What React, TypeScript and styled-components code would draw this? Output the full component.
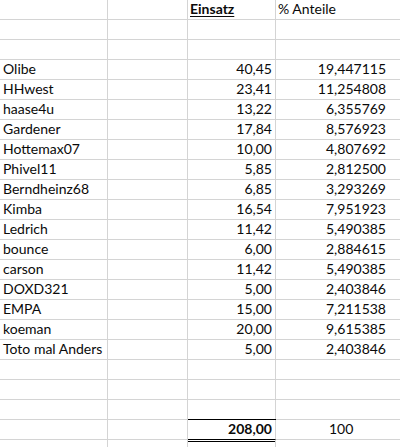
import React from "react";
import styled, { createGlobalStyle } from "styled-components";

const Global = createGlobalStyle`
  html, body { margin: 0; padding: 0; background: #ffffff; }
  body { font-family: "Lato", "Liberation Sans", sans-serif; }
`;

const Sheet = styled.div`
  display: grid;
  grid-template-columns: 108px 80px 88px 126px;
  grid-auto-rows: 20px;
  width: 400px;
  height: 447px;
  overflow: hidden;
  background: #fff;
  color: #0a0a0a;
  font-family: "Lato", "Liberation Sans", sans-serif;
  font-size: 14px;
`;

type CellProps = { $align?: "left" | "right" | "center"; $last?: boolean; $bold?: boolean; $under?: boolean; $total?: boolean; $pr?: number; $pl?: number };

const Cell = styled.div<CellProps>`
  position: relative;
  box-sizing: border-box;
  display: flex;
  align-items: flex-end;
  justify-content: ${(p) => (p.$align === "right" ? "flex-end" : p.$align === "center" ? "center" : "flex-start")};
  padding: 0 ${(p) => p.$pr ?? 3}px 2px ${(p) => p.$pl ?? 3}px;
  border-bottom: 1px solid ${(p) => (p.$total ? "#000" : "#d4d4d4")};
  border-right: ${(p) => (p.$last ? "none" : "1px solid #d4d4d4")};
  font-weight: ${(p) => (p.$bold ? 700 : 400)};
  text-decoration: ${(p) => (p.$under ? "underline" : "none")};
  text-underline-offset: 2px;
  white-space: nowrap;
  line-height: 16px;
  ${(p) =>
    p.$total
      ? `
    box-shadow: 0 -1px 0 #000;
    &::after {
      content: "";
      position: absolute;
      left: -1px;
      right: 0;
      bottom: -3px;
      height: 1px;
      background: #000;
    }
  `
      : ""}
`;

const rows: [string, string, string][] = [
  ["Olibe", "40,45", "19,447115"],
  ["HHwest", "23,41", "11,254808"],
  ["haase4u", "13,22", "6,355769"],
  ["Gardener", "17,84", "8,576923"],
  ["Hottemax07", "10,00", "4,807692"],
  ["Phivel11", "5,85", "2,812500"],
  ["Berndheinz68", "6,85", "3,293269"],
  ["Kimba", "16,54", "7,951923"],
  ["Ledrich", "11,42", "5,490385"],
  ["bounce", "6,00", "2,884615"],
  ["carson", "11,42", "5,490385"],
  ["DOXD321", "5,00", "2,403846"],
  ["EMPA", "15,00", "7,211538"],
  ["koeman", "20,00", "9,615385"],
  ["Toto mal Anders", "5,00", "2,403846"],
];

const EmptyRow: React.FC = () => (
  <>
    <Cell />
    <Cell />
    <Cell />
    <Cell $last />
  </>
);

export default function App() {
  return (
    <>
      <Global />
      <Sheet>
        <Cell />
        <Cell />
        <Cell $bold $under $pl={2}>Einsatz</Cell>
        <Cell $last $pl={2}>% Anteile</Cell>
        <EmptyRow />
        <EmptyRow />
        {rows.map(([n, e, a]) => (
          <React.Fragment key={n}>
            <Cell>{n}</Cell>
            <Cell />
            <Cell $align="right">{e}</Cell>
            <Cell $align="right" $last $pr={16}>{a}</Cell>
          </React.Fragment>
        ))}
        <EmptyRow />
        <EmptyRow />
        <EmptyRow />
        <Cell />
        <Cell />
        <Cell $align="right" $bold $total>208,00</Cell>
        <Cell $last $pl={53}>100</Cell>
        <EmptyRow />
      </Sheet>
    </>
  );
}
